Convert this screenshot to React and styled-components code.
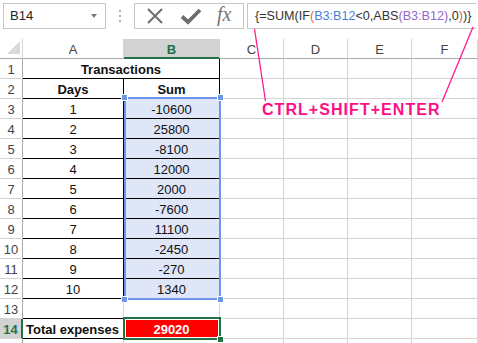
import React from "react";
import styled, { createGlobalStyle } from "styled-components";

const Global = createGlobalStyle`
  html, body { margin: 0; padding: 0; background: #fff; overflow: hidden; }
  body { font-family: "Liberation Sans", Arial, sans-serif; }
`;

const Page = styled.div`
  position: relative;
  width: 478px;
  height: 343px;
  overflow: hidden;
`;

const Bar = styled.div`
  display: flex;
  align-items: center;
  height: 39px;
  padding: 0 2px 8px 3px;
  box-sizing: border-box;
`;

const NameBox = styled.div`
  width: 103px;
  height: 26px;
  box-sizing: border-box;
  border: 1px solid #c6c6c6;
  display: flex;
  align-items: center;
  justify-content: space-between;
  padding: 0 8px 0 6px;
  font-size: 13px;
  color: #222;
`;

const Caret = styled.span`
  width: 0;
  height: 0;
  border-left: 3.5px solid transparent;
  border-right: 3.5px solid transparent;
  border-top: 4px solid #7a7a7a;
`;

const Dots = styled.div`
  width: 28px;
  display: flex;
  flex-direction: column;
  align-items: center;
  gap: 3px;
  span { width: 2px; height: 2px; background: #b0b0b0; }
`;

const Buttons = styled.div`
  width: 110px;
  height: 26px;
  box-sizing: border-box;
  border: 1px solid #c6c6c6;
  display: flex;
  align-items: center;
  justify-content: space-around;
  padding: 0 4px 0 2px;
`;

const Fx = styled.span`
  font-family: "Liberation Serif", "Times New Roman", serif;
  font-style: italic;
  font-size: 20px;
  color: #737373;
  letter-spacing: 0px;
  margin-top: -2px;
`;

const Input = styled.div`
  flex: 1;
  margin-left: 3px;
  height: 26px;
  box-sizing: border-box;
  border: 1px solid #c6c6c6;
  border-right: none;
  display: flex;
  align-items: center;
  padding-left: 7px;
  font-size: 12.6px;
  color: #333;
  white-space: nowrap;
`;

const Tok = styled.span`
  color: ${(p) => p.$c};
`;

const Sheet = styled.div`
  display: grid;
  grid-template-columns: 23px 101px 96px 64px 64px 64px 66px;
  grid-auto-rows: 20px;
  font-size: 13px;
  color: #111;
`;

const Corner = styled.div`
  position: relative;
  border-right: 1px solid #d4d4d4;
  border-bottom: 1px solid #ababab;
  &::after {
    content: "";
    position: absolute;
    right: 2px;
    bottom: 4px;
    width: 0;
    height: 0;
    border-left: 13px solid transparent;
    border-bottom: 13px solid #dadada;
  }
`;

const ColHead = styled.div`
  display: flex;
  align-items: center;
  justify-content: center;
  padding-top: 2px;
  box-sizing: border-box;
  border-right: 1px solid #d4d4d4;
  border-bottom: ${(p) => (p.$on ? "2px solid #217346" : "1px solid #ababab")};
  background: ${(p) => (p.$on ? "#d2d2d2" : "#fff")};
  color: ${(p) => (p.$on ? "#217346" : "#444")};
  font-weight: ${(p) => (p.$on ? 700 : 400)};
`;

const RowHead = styled.div`
  display: flex;
  align-items: flex-end;
  justify-content: center;
  padding-bottom: 1px;
  box-sizing: border-box;
  border-right: ${(p) => (p.$on ? "2px solid #217346" : "1px solid #ababab")};
  border-bottom: 1px solid #d4d4d4;
  background: ${(p) => (p.$on ? "#d2d2d2" : "#fff")};
  color: ${(p) => (p.$on ? "#217346" : "#444")};
  font-weight: ${(p) => (p.$on ? 700 : 400)};
`;

const Cell = styled.div`
  position: relative;
  display: flex;
  align-items: flex-end;
  justify-content: ${(p) => (p.$left ? "flex-start" : "center")};
  padding: 0 0 1px ${(p) => (p.$left ? "3px" : "0")};
  box-sizing: border-box;
  grid-column: ${(p) => (p.$span ? `span ${p.$span}` : "auto")};
  border-right: 1px solid ${(p) => (p.$rb ? "#000" : "#d4d4d4")};
  border-bottom: 1px solid ${(p) => (p.$bb ? "#000" : "#d4d4d4")};
  background: ${(p) => p.$bg || "transparent"};
  color: ${(p) => p.$color || "#111"};
  font-weight: ${(p) => (p.$bold ? 700 : 400)};
  white-space: nowrap;
`;

/* selection frame drawn over a range of cells, anchored to its first cell */
const Selection = styled.span`
  position: absolute;
  box-sizing: border-box;
  top: -2px;
  left: ${(p) => p.$l};
  width: ${(p) => p.$w};
  height: ${(p) => p.$h};
  border: 2px solid ${(p) => p.$c};
  box-shadow: ${(p) => (p.$inner ? "inset 0 0 0 1px #fff" : "none")};
  pointer-events: none;
  z-index: 2;
`;

const Handle = styled.span`
  position: absolute;
  width: 5px;
  height: 5px;
  background: ${(p) => p.$c};
  outline: 1px solid #fff;
  ${(p) => (p.$top ? "top: -4px;" : "bottom: -4px;")}
  ${(p) => (p.$lft ? "left: -4px;" : "right: -4px;")}
`;

const Overlay = styled.svg`
  position: absolute;
  left: 0;
  top: 0;
  pointer-events: none;
  z-index: 3;
`;

const Hint = styled.div`
  position: absolute;
  left: 262px;
  top: 101px;
  font-size: 16px;
  font-weight: 700;
  letter-spacing: 1.05px;
  color: #ff0d86;
  z-index: 3;
`;

const data = [
  [1, -10600],
  [2, 25800],
  [3, -8100],
  [4, 12000],
  [5, 2000],
  [6, -7600],
  [7, 11100],
  [8, -2450],
  [9, -270],
  [10, 1340],
];

const Empty = ({ n = 5 }) =>
  Array.from({ length: n }, (_, i) => <Cell key={i} />);

const BLUE = "#6d95e8";
const GREEN = "#217346";

export default function App() {
  return (
    <Page>
      <Global />
      <Bar>
        <NameBox>
          B14
          <Caret />
        </NameBox>
        <Dots>
          <span />
          <span />
          <span />
        </Dots>
        <Buttons>
          <svg width="20" height="20" viewBox="0 0 20 20">
            <path d="M3 3 L17 17 M17 3 L3 17" stroke="#6d6d6d" strokeWidth="2" fill="none" />
          </svg>
          <svg width="22" height="20" viewBox="0 0 22 20">
            <path d="M2 10.5 L8 16 L20 4" stroke="#6d6d6d" strokeWidth="3.8" fill="none" />
          </svg>
          <Fx>fx</Fx>
        </Buttons>
        <Input>
          <Tok $c="#333">{"{=SUM(IF"}</Tok>
          <Tok $c="#e4605a">(</Tok>
          <Tok $c="#4a7fd8">B3:B12</Tok>
          <Tok $c="#333">{"<0,ABS"}</Tok>
          <Tok $c="#9467cf">(B3:B12)</Tok>
          <Tok $c="#333">,0</Tok>
          <Tok $c="#e4605a">)</Tok>
          <Tok $c="#333">{")}"}</Tok>
        </Input>
      </Bar>
      <Sheet>
        <Corner />
        {["A", "B", "C", "D", "E", "F"].map((c) => (
          <ColHead key={c} $on={c === "B"}>
            {c}
          </ColHead>
        ))}

        <RowHead>1</RowHead>
        <Cell $span={2} $rb $bb $bold>
          Transactions
        </Cell>
        <Empty n={4} />

        <RowHead>2</RowHead>
        <Cell $rb $bb $bold>Days</Cell>
        <Cell $rb $bb $bold>Sum</Cell>
        <Empty n={4} />

        {data.map(([d, s], i) => (
          <React.Fragment key={d}>
            <RowHead>{i + 3}</RowHead>
            <Cell $rb $bb>{d}</Cell>
            <Cell $rb $bb $bg="#dfe6f8">
              {s}
              {i === 0 && (
                <Selection $c={BLUE} $l="0px" $w="97px" $h="203px">
                  <Handle $c={BLUE} $top $lft />
                  <Handle $c={BLUE} $top />
                  <Handle $c={BLUE} $lft />
                  <Handle $c={BLUE} />
                </Selection>
              )}
            </Cell>
            <Empty n={4} />
          </React.Fragment>
        ))}

        <RowHead>13</RowHead>
        <Cell $bb />
        <Empty n={5} />

        <RowHead $on>14</RowHead>
        <Cell $rb $bb $bold $left>Total expenses</Cell>
        <Cell $bg="#ff0000" $color="#fff" $bold>
          29020
          <Selection $c={GREEN} $l="-1px" $w="98px" $h="23px" $inner>
            <Handle $c={GREEN} />
          </Selection>
        </Cell>
        <Empty n={4} />

        <RowHead />
        <Empty n={6} />
      </Sheet>

      <Overlay width="478" height="343">
        <line x1="254.5" y1="29" x2="265.5" y2="101" stroke="#ff1a8c" strokeWidth="1.3" />
        <line x1="473" y1="27" x2="442" y2="102" stroke="#ff1a8c" strokeWidth="1.3" />
      </Overlay>
      <Hint>CTRL+SHIFT+ENTER</Hint>
    </Page>
  );
}
